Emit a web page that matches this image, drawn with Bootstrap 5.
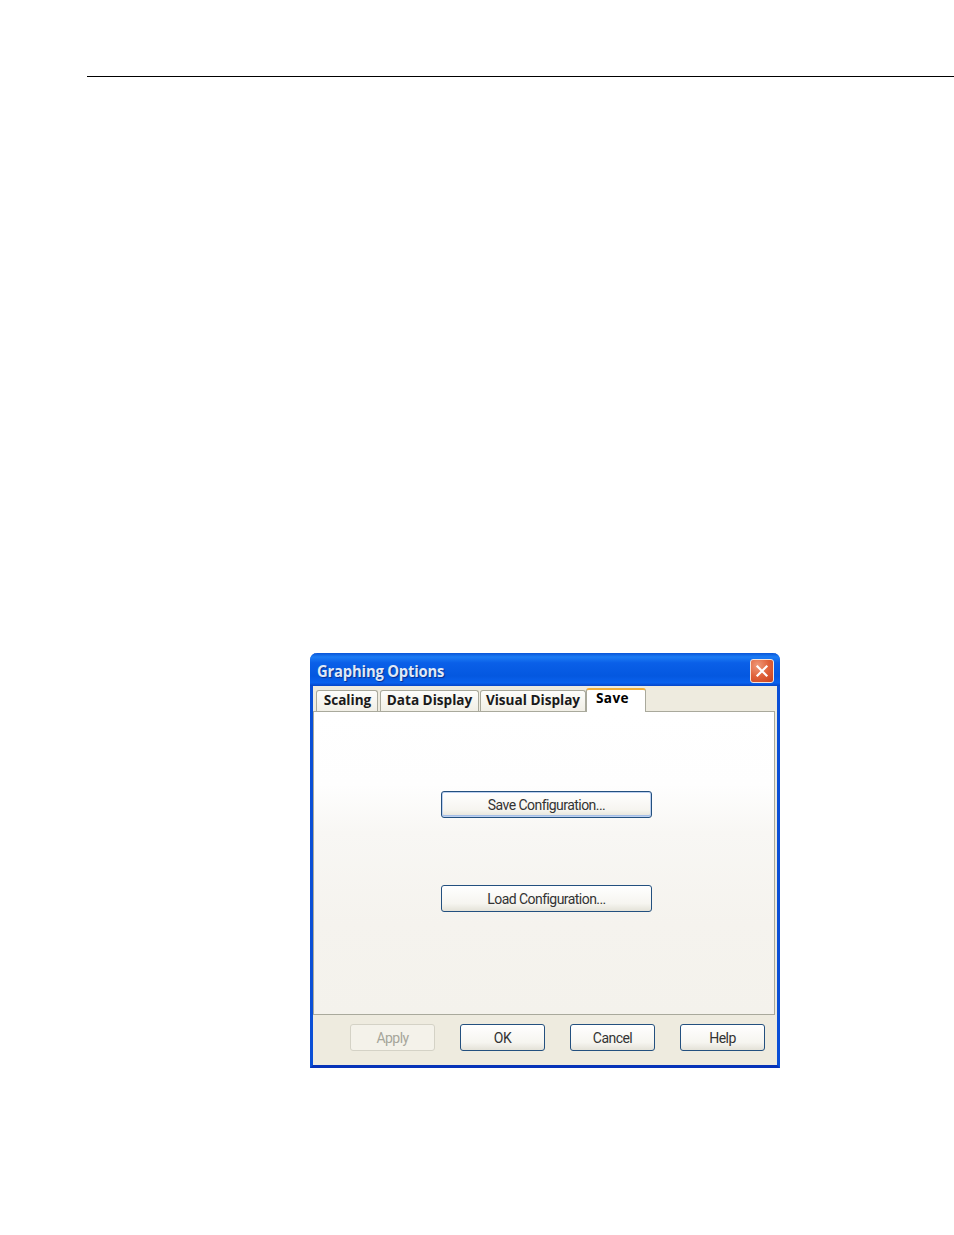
<!DOCTYPE html>
<html lang="en">
<head>
<meta charset="utf-8">
<title>Graphing Options</title>
<link href="https://cdn.jsdelivr.net/npm/bootstrap@5.3.0/dist/css/bootstrap.min.css" rel="stylesheet">
<style>
html, body { background: #fff; margin: 0; }
.page-sheet { width: 954px; height: 1235px; padding-top: 76px; overflow: hidden; }
.top-rule { height: 1px; margin: 0 0 576px 87px; background: #000; opacity: 1; border: 0; }
.xp-window { width: 470px; height: 415px; margin-left: 310px; background: #eeebdf; border-radius: 7px 7px 0 0; border: 3px solid #0a4fd6; border-top: 0; border-bottom-color: #0733b8; }
.xp-title { height: 33px; margin: 0 -3px; padding: 3px 6px 0 7px; border-radius: 7px 7px 0 0; background: linear-gradient(180deg, #0a55d8 0%, #1c7cf4 12%, #0a5fe8 30%, #0458e0 70%, #0a62ee 90%, #0546c8 100%); }
.xp-title-text { font: 700 16px/1 "Open Sans", sans-serif; color: #dfe9f8; letter-spacing: -.2px; text-shadow: 1px 1px 1px #0a2f90; transform: scaleX(.925); transform-origin: left center; }
.xp-close { width: 24px; height: 24px; padding: 0; border: 1px solid #f3e4dc; border-radius: 3px; background: radial-gradient(circle at 30% 25%, #ef9a7a 0%, #e0623a 50%, #c8401c 100%); }
.xp-close svg { display: block; margin: auto; }
.xp-tabs { height: 25px; padding-left: 3px; border: 0; gap: 0; align-items: flex-end; flex-wrap: nowrap; }
.xp-tabs .nav-link { height: 21px; padding: 0; margin: 0; text-align: center; color: #1a1a1a; font: 700 13.6px/18px "Open Sans", sans-serif; border: 1px solid #a9a99c; border-bottom: 0; border-radius: 3px 3px 0 0; background: linear-gradient(180deg, #fdfdfb, #f1efe6); }
.xp-tabs .nav-link.active { height: 24px; line-height: 16px; padding-right: 7px; margin-bottom: -1px; position: relative; z-index: 1; background: #fff; border-color: #a9a99c; border-top: 2px solid #f0b03c; letter-spacing: .4px; }
.tab-scaling { width: 62px; margin-right: 2px !important; padding-left: 1px !important; }
.tab-data { width: 99px; margin-right: 1px !important; }
.tab-visual { width: 106px; }
.tab-save { width: 60px; }
.xp-panel { height: 304px; margin-right: 2px; padding: 79px 0 0 5px; gap: 67px; border: 1px solid #a9a99c; background: linear-gradient(180deg, #fff 0%, #fefefe 24%, #f8f7f4 40%, #f5f3ee 70%, #f4f2ec 100%); }
.xp-btn { padding: 1px 0 0; color: #333; background: linear-gradient(180deg, #fff 0%, #f6f5f0 70%, #e4e2d8 100%); border: 1px solid #23507f; border-radius: 3px; font: 400 14px/1 Roboto, sans-serif; letter-spacing: -.55px; }
.xp-btn:disabled { color: #a6a69a; background: #f4f2ea; border-color: #d4d2c6; opacity: 1; }
.xp-wide { width: 211px; height: 27px; }
.xp-wide-default { box-shadow: inset 0 0 0 1px #bcd0ef, inset 0 -1px 0 1px #a3bde6; }
.xp-foot { height: 53px; padding: 9px 10px 0 37px; gap: 25px; }
.xp-foot .xp-btn { width: 85px; height: 27px; }
</style>
</head>
<body>
<div class="page-sheet">
  <hr class="top-rule">
  <div class="xp-window d-flex flex-column">
    <div class="xp-title d-flex align-items-center justify-content-between flex-shrink-0">
      <span class="xp-title-text">Graphing Options</span>
      <button type="button" class="xp-close" aria-label="Close">
        <svg width="14" height="14" viewBox="0 0 14 14"><path d="M2.5 2.5l9 9M11.5 2.5l-9 9" stroke="#fff" stroke-width="2.2" stroke-linecap="square" fill="none"/></svg>
      </button>
    </div>
    <ul class="nav nav-tabs xp-tabs flex-shrink-0">
      <li class="nav-item"><a class="nav-link tab-scaling" href="#">Scaling</a></li>
      <li class="nav-item"><a class="nav-link tab-data" href="#">Data Display</a></li>
      <li class="nav-item"><a class="nav-link tab-visual" href="#">Visual Display</a></li>
      <li class="nav-item"><a class="nav-link tab-save active" href="#">Save</a></li>
    </ul>
    <div class="xp-panel d-flex flex-column align-items-center flex-shrink-0">
      <button type="button" class="btn xp-btn xp-wide xp-wide-default">Save Configuration...</button>
      <button type="button" class="btn xp-btn xp-wide">Load Configuration...</button>
    </div>
    <div class="xp-foot d-flex">
      <button type="button" class="btn xp-btn" disabled>Apply</button>
      <button type="button" class="btn xp-btn">OK</button>
      <button type="button" class="btn xp-btn">Cancel</button>
      <button type="button" class="btn xp-btn">Help</button>
    </div>
  </div>
</div>
<script src="https://cdn.jsdelivr.net/npm/bootstrap@5.3.0/dist/js/bootstrap.bundle.min.js"></script>
</body>
</html>
